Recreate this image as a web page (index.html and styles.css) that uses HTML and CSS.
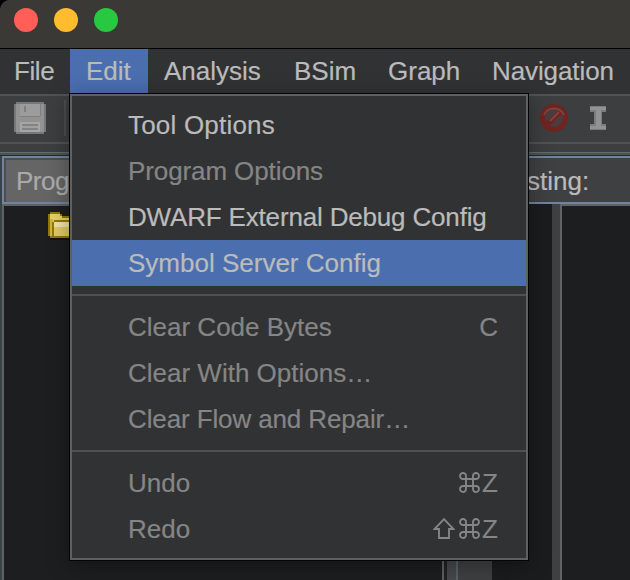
FILE: index.html
```html
<!DOCTYPE html>
<html lang="en">
<head>
<meta charset="utf-8">
<title>Edit menu</title>
<link rel="stylesheet" href="styles.css">
</head>
<body>
<div class="window">
  <header class="titlebar"><i class="light close"></i><i class="light minimize"></i><i class="light expand"></i></header>
  <nav class="menubar">
    <span class="menu file">File</span>
    <span class="menu edit active">Edit</span>
    <span class="menu analysis">Analysis</span>
    <span class="menu bsim">BSim</span>
    <span class="menu graph">Graph</span>
    <span class="menu navigation">Navigation</span>
  </nav>
  <div class="toolbar">
    <svg class="save" width="32" height="32" viewBox="0 0 32 32" shape-rendering="crispEdges">
      <path fill="#777879" d="M2 0h28v2h2v28h-2v2H2v-2H0V2h2z"/>
      <path fill="#929292" d="M2 2h28v28H2z"/>
      <path fill="#9c9c9c" d="M6 2h20v12H6z"/>
      <path fill="#7f7f7f" d="M10 4h2v6h-2zM26 2h1v12h-1zM6 14h20v1H6z"/>
      <path fill="none" stroke="#a6a6a6" stroke-width="2" d="M7 21h18v8H7z"/>
      <path fill="#838383" d="M8 22h16v2H8zM8 26h16v2H8z"/>
      <path fill="#a0a0a0" d="M8 24h16v2H8z"/>
    </svg>
    <i class="divider"></i>
    <svg class="clear" width="28" height="28" viewBox="0 0 28 28">
      <circle cx="14" cy="14" r="11.500" fill="#4b3d3e" stroke="#702421" stroke-width="5"/>
      <path d="M7 21L21 7" stroke="#702421" stroke-width="5"/>
      <path d="M4 11a11 11 0 0 1 20 0M10 17l9-9" stroke="#7c4441" stroke-width="2" fill="none"/>
    </svg>
    <svg class="cursor" width="16" height="24" viewBox="0 0 16 24" shape-rendering="crispEdges">
      <path fill="#7b7c7d" d="M0 0h16v6h-4v12h4v6H0v-6h4V6H0z"/>
      <path fill="#929292" d="M0 1h16v3H0zM0 20h16v3H0zM6 4h5v16H6z"/>
    </svg>
  </div>
  <div class="gutter"></div>
  <main class="workspace">
    <section class="tree-panel">
      <div class="tree-head">Prog</div>
      <div class="tree-body">
        <svg class="folder" width="30" height="28" viewBox="0 0 30 28" shape-rendering="crispEdges">
          <path fill="#111" d="M2 26h28v2H2z"/>
          <path fill="#947807" d="M0 2h2V0h10v2h2v2h16v22H2v-2H0z"/>
          <path fill="#e6d168" d="M2 2h10v2h2v2h16v4H2z"/>
          <path fill="#d0b744" d="M2 7h3v17H2z"/>
          <path fill="#947807" d="M4 10h2V8h24v2H6v14H4z"/>
          <path fill="#eee4ab" d="M6 10h24v5H6z"/>
          <path fill="#dfcb65" d="M6 15h24v9H6z"/>
        </svg>
      </div>
    </section>
    <div class="splitter"></div>
    <section class="listing-panel">
      <div class="listing-head">sting:</div>
      <div class="listing-body">
        <div class="strip"></div><div class="margin"></div><div class="divide"></div><div class="code"></div>
      </div>
    </section>
  </main>
  <div class="popup">
    <div class="item tool">Tool Options</div>
    <div class="item off program">Program Options</div>
    <div class="item dwarf">DWARF External Debug Config</div>
    <div class="item selected">Symbol Server Config</div>
    <hr>
    <div class="item off"><span>Clear Code Bytes</span><span>C</span></div>
    <div class="item off">Clear With Options…</div>
    <div class="item off flow">Clear Flow and Repair…</div>
    <hr>
    <div class="item off"><span>Undo</span><span class="keys">
      <svg class="cmd" width="21" height="21" viewBox="0 0 21 21"><path d="M7 7h7v7H7zM7 7H4.200A3 3 0 1 1 7 4.200zM14 7V4.200A3 3 0 1 1 16.800 7zM14 14h2.800A3 3 0 1 1 14 16.800zM7 14v2.800A3 3 0 1 1 4.200 14z"/></svg><b>Z</b></span></div>
    <div class="item off"><span>Redo</span><span class="keys">
      <svg class="shift" width="22" height="21" viewBox="0 0 22 21"><path d="M11 1.200L1.500 11H6v9h10v-9h4.500z"/></svg>
      <svg class="cmd" width="21" height="21" viewBox="0 0 21 21"><path d="M7 7h7v7H7zM7 7H4.200A3 3 0 1 1 7 4.200zM14 7V4.200A3 3 0 1 1 16.800 7zM14 14h2.800A3 3 0 1 1 14 16.800zM7 14v2.800A3 3 0 1 1 4.200 14z"/></svg><b>Z</b></span></div>
  </div>
</div>
</body>
</html>
```
FILE: styles.css
```css
* { box-sizing: border-box; }
body { margin: 0; background: #000; color: #bbb; font: 26px/30px "Liberation Sans", Arial, sans-serif; -webkit-text-stroke: 0.2px; }
.window { position: relative; display: flex; flex-direction: column; width: 630px; height: 580px; overflow: hidden; background: #3f4042; border-top-left-radius: 10px; }
.titlebar { flex: 0 0 49px; display: flex; gap: 16px; padding: 8px 14px; background: #3a3935; border-bottom: 1px solid #000; }
.light { width: 24px; height: 24px; border-radius: 50%; }
.close { background: #ff5f57; }
.minimize { background: #febc2e; }
.expand { background: #28c840; }
.menubar { flex: 0 0 45px; display: flex; background: #313234; }
.menu { height: 44px; padding: 7px 0 0 16px; white-space: nowrap; }
.file { width: 70px; padding-left: 14px; letter-spacing: -0.4px; }
.edit { width: 78px; }
.analysis { width: 130px; }
.bsim { width: 94px; }
.graph { width: 104px; }
.navigation { letter-spacing: -0.1px; }
.active { background: #4b6eaf; }
.toolbar { flex: 0 0 50px; display: flex; padding-left: 14px; border-top: 2px solid #515254; border-bottom: 2px solid #515254; background: #3d3e40; }
.save { margin-top: 6px; }
.divider { width: 2px; height: 36px; margin: 4px 473px 0 18px; background: #4c4d4f; }
.clear { margin: 8px 22px 0 1px; }
.cursor { margin-top: 10px; }
.gutter { flex: 0 0 12px; border-bottom: 1px solid #292a2c; background: linear-gradient(#3d3e40 8px, #626d6f 8px 9px, #4b5355 9px); }
.workspace { flex: 1; display: flex; min-height: 0; }
.tree-panel { width: 444px; display: flex; flex-direction: column; border-left: 2px solid #394346; }
.tree-head { height: 48px; padding: 8px 0 0 12px; border: 2px solid #71849d; box-shadow: inset 2px 2px #4b4d50; background: #656565; color: #aaa; letter-spacing: -0.5px; }
.tree-body { flex: 1; padding: 6px 0 0 44px; border: 2px solid #606163; border-bottom: 0; background: #1d1e20; }
.folder { display: block; }
.splitter { width: 14px; border-left: 3px solid #222325; border-right: 2px solid #566467; background: #46484a; }
.listing-panel { flex: 1; display: flex; flex-direction: column; }
.listing-head { height: 48px; padding: 8px 0 0 69px; border-top: 2px solid #71849d; border-bottom: 2px solid #71849d; background: #3f4042; }
.listing-body { flex: 1; display: flex; }
.strip { width: 34px; }
.margin { width: 60px; background: #1b1c1e; }
.divide { width: 8px; background: #3f4042; }
.code { flex: 1; border-left: 2px solid #626365; border-top: 2px solid #626365; background: #1d1e20; }
.popup { position: absolute; left: 69px; top: 93px; width: 460px; height: 468px; padding: 8px 2px; border: 1px solid #050505; background: #313234; box-shadow: inset 0 0 0 2px #5e6062, 0 5px 22px #0005; }
.item { display: flex; justify-content: space-between; height: 46px; padding: 8px 28px 0 56px; white-space: nowrap; }
.off { color: #858585; }
.tool { letter-spacing: 0.2px; }
.program { letter-spacing: -0.1px; }
.dwarf { letter-spacing: -0.17px; }
.flow { letter-spacing: -0.12px; }
.selected { background: #4b6eaf; }
.popup hr { height: 2px; margin: 8px 0; border: 0; background: #505153; }
.keys { display: flex; }
.cmd { margin: 4px 2px 0 0; }
.shift { margin: 4px 4px 0 0; }
.keys path { fill: none; stroke: #858585; stroke-width: 1.9; }
.keys b { font-weight: 400; }
```
